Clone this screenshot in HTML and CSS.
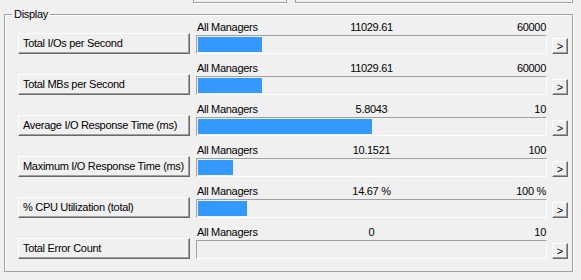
FILE: index.html
```html
<!DOCTYPE html>
<html lang="en">
<head>
  <meta charset="UTF-8">
  <title>Display</title>
  <link rel="stylesheet" href="styles.css">
</head>
<body>

  <div class="top-strip">
    <div class="top-box box-a"></div>
    <div class="top-box box-b"></div>
  </div>

  <fieldset class="display-group">
    <legend>Display</legend>

    <div class="meter-row">
      <button class="metric-button">Total I/Os per Second</button>
      <div class="meter-labels"><span>All Managers</span><span class="value">11029.61</span><span class="max">60000</span></div>
      <div class="meter-bar"><div class="meter-fill" style="width: 64px"></div></div>
      <button class="more-button">&gt;</button>
    </div>

    <div class="meter-row">
      <button class="metric-button">Total MBs per Second</button>
      <div class="meter-labels"><span>All Managers</span><span class="value">11029.61</span><span class="max">60000</span></div>
      <div class="meter-bar"><div class="meter-fill" style="width: 64px"></div></div>
      <button class="more-button">&gt;</button>
    </div>

    <div class="meter-row">
      <button class="metric-button">Average I/O Response Time (ms)</button>
      <div class="meter-labels"><span>All Managers</span><span class="value">5.8043</span><span class="max">10</span></div>
      <div class="meter-bar"><div class="meter-fill" style="width: 174px"></div></div>
      <button class="more-button">&gt;</button>
    </div>

    <div class="meter-row">
      <button class="metric-button">Maximum I/O Response Time (ms)</button>
      <div class="meter-labels"><span>All Managers</span><span class="value">10.1521</span><span class="max">100</span></div>
      <div class="meter-bar"><div class="meter-fill" style="width: 35px"></div></div>
      <button class="more-button">&gt;</button>
    </div>

    <div class="meter-row">
      <button class="metric-button">% CPU Utilization (total)</button>
      <div class="meter-labels"><span>All Managers</span><span class="value">14.67 %</span><span class="max">100 %</span></div>
      <div class="meter-bar"><div class="meter-fill" style="width: 49px"></div></div>
      <button class="more-button">&gt;</button>
    </div>

    <div class="meter-row">
      <button class="metric-button">Total Error Count</button>
      <div class="meter-labels"><span>All Managers</span><span class="value">0</span><span class="max">10</span></div>
      <div class="meter-bar"><div class="meter-fill" style="width: 0px"></div></div>
      <button class="more-button">&gt;</button>
    </div>
  </fieldset>

</body>
</html>
```

FILE: styles.css
```css
body {
  margin: 0;
  background-color: #f0f0f0;
  font-family: "Liberation Sans", Arial, sans-serif;
  font-size: 11px;
  letter-spacing: -0.3px;
  color: #000;
}

/* bottoms of the two edit boxes above the group */
.top-strip {
  height: 3px;
  display: flex;
}

.top-box {
  height: 2px;
  border: 1px solid #a0a0a0;
  border-top: none;
  box-shadow: 0 1px 0 #fff;
}

.box-a {
  margin-left: 193px;
  width: 92px;
}

.box-b {
  margin-left: 8px;
  width: 276px;
}

.display-group {
  margin: 5px 0 0 4px;
  width: 569px;
  height: 264px;
  padding: 1px 0 0 13px;
  box-sizing: border-box;
  border: 1px solid #a0a0a0;
  box-shadow: inset 1px 1px 0 #fff, 1px 1px 0 #fff;
  display: flex;
  flex-direction: column;
  gap: 9px;
}

.display-group legend {
  margin-left: -6px;
  padding: 0 2px;
  line-height: 13px;
}

.meter-row {
  display: grid;
  grid-template-columns: 172px 351px 15px;
  grid-template-rows: 13px 19px;
  column-gap: 6px;
}

.metric-button {
  grid-column: 1;
  grid-row: 1 / 3;
  align-self: end;
  height: 21px;
  margin: 0;
  padding: 0 0 1px 4px;
  text-align: left;
  white-space: nowrap;
  overflow: hidden;
  font: inherit;
  letter-spacing: inherit;
  color: #000;
  background-color: #f0f0f0;
  border: 1px solid;
  border-color: #fff #696969 #696969 #fff;
  box-shadow: inset -1px -1px 0 #a0a0a0;
  cursor: pointer;
}

.meter-labels {
  grid-column: 2;
  grid-row: 1;
  display: grid;
  grid-template-columns: 1fr auto 1fr;
  line-height: 13px;
  padding: 0 1px;
  margin-top: -1px;
}

.meter-labels .max {
  text-align: right;
}

.meter-bar {
  grid-column: 2;
  grid-row: 2;
  padding: 1px;
  border: 1px solid;
  border-color: #a0a0a0 #fff #fff #a0a0a0;
  background-color: #f0f0f0;
}

.meter-fill {
  height: 100%;
  background-color: #3399ff;
}

.more-button {
  grid-column: 3;
  grid-row: 2;
  align-self: end;
  height: 16px;
  margin-left: -1px;
  padding: 0;
  font: inherit;
  font-size: 11px;
  line-height: 12px;
  color: #000;
  background-color: #f0f0f0;
  border: 1px solid;
  border-color: #fff #696969 #696969 #fff;
  box-shadow: inset -1px -1px 0 #a0a0a0;
  cursor: pointer;
}
```
